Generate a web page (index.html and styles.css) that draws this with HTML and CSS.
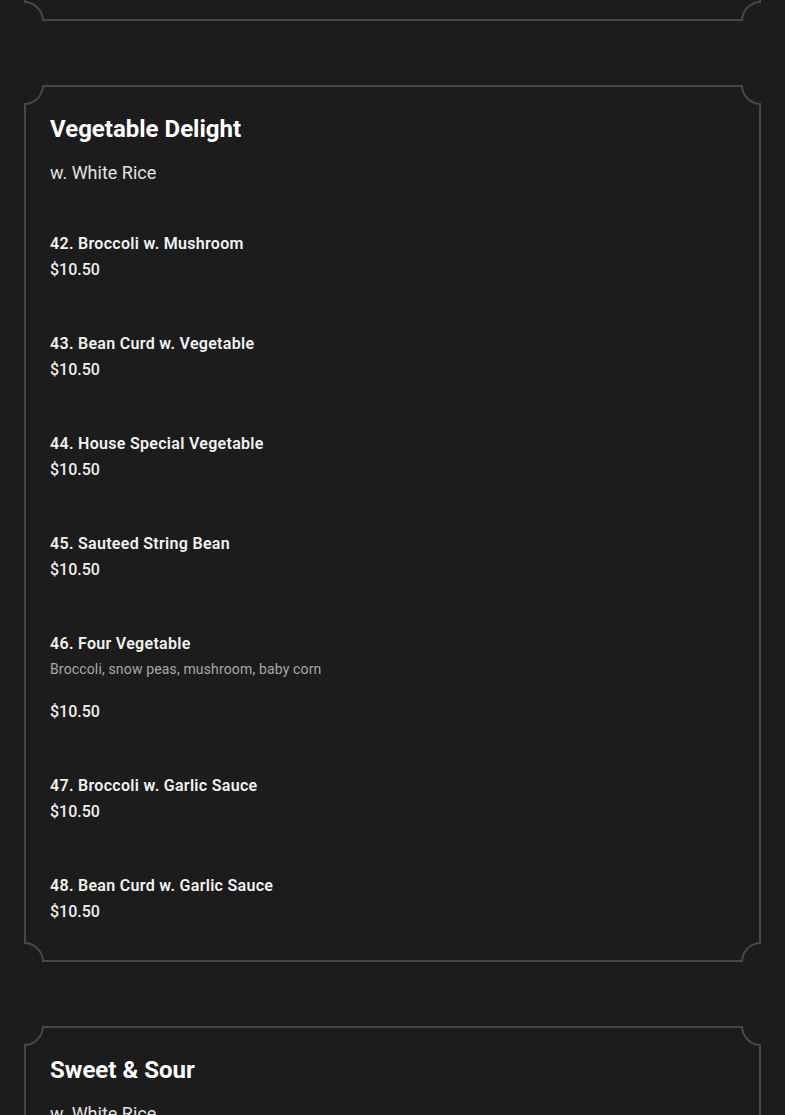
FILE: index.html
```html
<!DOCTYPE html>
<html lang="en">
<head>
<meta charset="utf-8">
<title>Menu</title>
<link rel="stylesheet" href="styles.css">
</head>
<body>
<main class="menu">
  <section class="card card-prev">
    <div class="frame"></div>
    <span class="corner tl"></span><span class="corner tr"></span><span class="corner bl"></span><span class="corner br"></span>
  </section>

  <section class="card">
    <div class="frame"></div>
    <span class="corner tl"></span><span class="corner tr"></span><span class="corner bl"></span><span class="corner br"></span>
    <div class="content">
      <h2 class="title">Vegetable Delight</h2>
      <p class="subtitle">w. White Rice</p>
      <ul class="items">
        <li class="item"><div class="name">42. Broccoli w. Mushroom</div><div class="price">$10.50</div></li>
        <li class="item"><div class="name">43. Bean Curd w. Vegetable</div><div class="price">$10.50</div></li>
        <li class="item"><div class="name">44. House Special Vegetable</div><div class="price">$10.50</div></li>
        <li class="item"><div class="name">45. Sauteed String Bean</div><div class="price">$10.50</div></li>
        <li class="item"><div class="name">46. Four Vegetable</div><div class="desc">Broccoli, snow peas, mushroom, baby corn</div><div class="price">$10.50</div></li>
        <li class="item"><div class="name">47. Broccoli w. Garlic Sauce</div><div class="price">$10.50</div></li>
        <li class="item"><div class="name">48. Bean Curd w. Garlic Sauce</div><div class="price">$10.50</div></li>
      </ul>
    </div>
  </section>

  <section class="card">
    <div class="frame"></div>
    <span class="corner tl"></span><span class="corner tr"></span><span class="corner bl"></span><span class="corner br"></span>
    <div class="content">
      <h2 class="title">Sweet &amp; Sour</h2>
      <p class="subtitle">w. White Rice</p>
    </div>
  </section>
</main>
</body>
</html>
```

FILE: styles.css
```css
* { box-sizing: border-box; }
html, body {
  margin: 0;
  padding: 0;
  background: #1c1c1c;
  color: #ffffff;
  font-family: Roboto, "Liberation Sans", Arial, sans-serif;
}
body { overflow: hidden; }
.menu {
  display: flex;
  flex-direction: column;
  gap: 64px;
  padding: 0 24px;
  margin-top: -200px;
}
.card {
  position: relative;
  overflow: hidden;
}
.card-prev { height: 221px; }
.frame {
  position: absolute;
  inset: 0;
  border: 2px solid #474747;
  z-index: 0;
}
.corner {
  position: absolute;
  width: 40px;
  height: 40px;
  border-radius: 50%;
  border: 2px solid #474747;
  background: #1c1c1c;
  z-index: 1;
}
.corner.tl { left: -20px; top: -20px; }
.corner.tr { right: -20px; top: -20px; }
.corner.bl { left: -20px; bottom: -20px; }
.corner.br { right: -20px; bottom: -20px; }
.content {
  position: relative;
  z-index: 2;
  padding: 28px 26px 38px;
}
.title {
  margin: 0;
  font-size: 24px;
  line-height: 32px;
  font-weight: 700;
  color: #ffffff;
}
.subtitle {
  margin: 14px 0 0;
  font-size: 18px;
  line-height: 27px;
  font-weight: 400;
  color: #e2e2e2;
}
.items {
  list-style: none;
  margin: 46px 0 0;
  padding: 0;
  display: flex;
  flex-direction: column;
  gap: 50px;
}
.name {
  font-size: 16px;
  line-height: 24px;
  font-weight: 600;
  color: #f2f2f2;
  letter-spacing: 0.3px;
}
.desc {
  margin: 3px 0 20px;
  font-size: 14px;
  line-height: 21px;
  color: #a8a8a8;
  letter-spacing: 0.15px;
}
.price {
  margin-top: 2px;
  font-size: 16px;
  line-height: 24px;
  font-weight: 500;
  color: #eeeeee;
}
```
